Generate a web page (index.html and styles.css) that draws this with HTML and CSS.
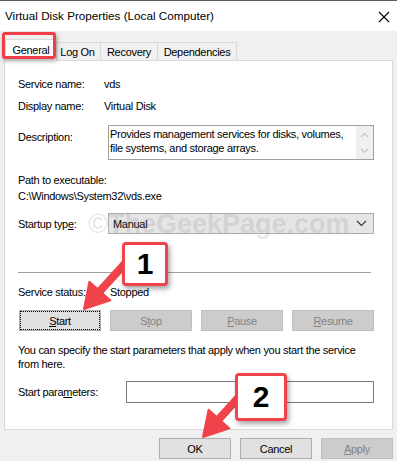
FILE: index.html
```html
<!DOCTYPE html>
<html lang="en">
<head>
  <meta charset="UTF-8">
  <title>Virtual Disk Properties (Local Computer)</title>
  <link rel="stylesheet" href="styles.css">
</head>
<body>
  <div class="window">
    <!-- Title bar -->
    <div class="titlebar">
      <span class="title">Virtual Disk Properties (Local Computer)</span>
      <svg class="close" width="12" height="12" viewBox="0 0 12 12">
        <path d="M1 1 L11 11 M11 1 L1 11" stroke="#000" stroke-width="1.1" fill="none"/>
      </svg>
    </div>

    <!-- Tabs -->
    <div class="tabs">
      <div class="tab tab-general active">General</div>
      <div class="tab tab-logon">Log On</div>
      <div class="tab tab-recovery">Recovery</div>
      <div class="tab tab-deps">Dependencies</div>
    </div>

    <!-- General tab page -->
    <div class="panel">
      <div class="row row-first">
        <span class="label">Service name:</span>
        <span class="value">vds</span>
      </div>
      <div class="row row-display">
        <span class="label">Display name:</span>
        <span class="value">Virtual Disk</span>
      </div>
      <div class="row row-desc">
        <span class="label label-wide">Description:</span>
        <div class="textbox">
          <div class="textbox-text">Provides management services for disks, volumes,<br>file systems, and storage arrays.</div>
          <div class="scrollbar">
            <svg width="9" height="6" viewBox="0 0 9 6"><path d="M1 5 L4.5 1.5 L8 5" stroke="#c4c4c4" stroke-width="1.2" fill="none"/></svg>
            <svg width="9" height="6" viewBox="0 0 9 6"><path d="M1 1 L4.5 4.5 L8 1" stroke="#c4c4c4" stroke-width="1.2" fill="none"/></svg>
          </div>
        </div>
      </div>
      <div class="path-label">Path to executable:</div>
      <div class="path-value">C:\Windows\System32\vds.exe</div>
      <div class="row row-startup">
        <span class="label label-wide">Startup typ<u>e</u>:</span>
        <div class="select">
          <span>Manual</span>
          <svg width="11" height="7" viewBox="0 0 11 7"><path d="M1 1 L5.5 5.5 L10 1" stroke="#333" stroke-width="1.1" fill="none"/></svg>
        </div>
      </div>
      <div class="separator"></div>
      <div class="row row-status">
        <span class="label">Service status:</span>
        <span class="value value-status">Stopped</span>
      </div>
      <div class="service-buttons">
        <button class="btn btn-focus"><u>S</u>tart</button>
        <button class="btn" disabled>S<u>t</u>op</button>
        <button class="btn" disabled><u>P</u>ause</button>
        <button class="btn" disabled><u>R</u>esume</button>
      </div>
      <p class="hint">You can specify the start parameters that apply when you start the service<br>from here.</p>
      <div class="row row-params">
        <span class="label label-params">Start para<u>m</u>eters:</span>
        <div class="input"></div>
      </div>
    </div>

    <!-- Dialog buttons -->
    <div class="actions">
      <button class="btn btn-dialog">OK</button>
      <button class="btn btn-dialog">Cancel</button>
      <button class="btn btn-dialog" disabled><u>A</u>pply</button>
    </div>
  </div>

  <!-- Annotations drawn over the dialog -->
  <div class="watermark">©TheGeekPage.com</div>
  <div class="highlight"></div>
  <svg class="arrows" width="397" height="461" viewBox="0 0 397 461">
    <g fill="#f0434b" stroke="#f0434b" stroke-linejoin="round">
      <line x1="132" y1="256" x2="100" y2="291" stroke-width="8"/>
      <polygon points="84,309 89.4,281.8 110.4,300.4" stroke-width="2"/>
      <line x1="248" y1="387" x2="219" y2="419" stroke-width="8"/>
      <polygon points="203,437 208.6,409.8 229.4,428.4" stroke-width="2"/>
    </g>
  </svg>
  <div class="callout callout-one">1</div>
  <div class="callout callout-two">2</div>
</body>
</html>
```

FILE: styles.css
```css
body {
  margin: 0;
  width: 397px;
  height: 461px;
  overflow: hidden;
  background-color: #f0f0f0;
  font-family: "Liberation Sans", Arial, sans-serif;
  font-size: 11px;
  line-height: 14px;
  letter-spacing: -0.3px;
  color: #000;
}

.window {
  height: 461px;
}

/* title bar */
.titlebar {
  height: 30px;
  background-color: #fff;
  border-top: 1px solid #5a5a5a;
  display: flex;
  align-items: center;
  justify-content: space-between;
  padding: 0 7px 0 5px;
}

.title {
  font-size: 11.7px;
  letter-spacing: 0;
}

.close {
  margin-top: 1px;
}

/* tabs */
.tabs {
  display: flex;
  align-items: flex-end;
  height: 29px;
  padding-left: 7px;
}

.tab {
  height: 18px;
  line-height: 18px;
  border: 1px solid #d9d9d9;
  border-bottom: none;
  background-color: #f0f0f0;
  text-align: center;
  margin-left: -1px;
  box-sizing: border-box;
}

.tab-general { width: 49px; }
.tab-logon { width: 47px; }
.tab-recovery { width: 58px; }
.tab-deps { width: 80px; }

.tab.active {
  background-color: #fff;
  height: 22px;
  line-height: 20px;
  width: 52px;
  margin: 0 -2px -1px -2px;
  position: relative;
  z-index: 1;
}

/* tab page */
.panel {
  margin: 0 4px;
  height: 370px;
  box-sizing: border-box;
  background-color: #fff;
  border: 1px solid #d9d9d9;
  padding: 16px 18px 0 13px;
}

.row {
  display: flex;
  align-items: flex-start;
}

.label {
  width: 86px;
  flex-shrink: 0;
}

.label-wide {
  width: 90px;
}

.label-params {
  width: 108px;
}

.row-display {
  margin-top: 8px;
}

.row-desc {
  margin-top: 12px;
}

.row-desc .label {
  margin-top: 5px;
}

.textbox {
  width: 266px;
  height: 35px;
  box-sizing: border-box;
  border: 1px solid #a0a0a0;
  display: flex;
}

.textbox-text {
  flex: 1;
  padding: 1px 0 0 1px;
  white-space: nowrap;
  overflow: hidden;
}

.scrollbar {
  width: 17px;
  flex-shrink: 0;
  background-color: #f0f0f0;
  display: flex;
  flex-direction: column;
  align-items: center;
  justify-content: space-between;
  padding: 6px 0 5px;
  box-sizing: border-box;
}

.path-label {
  margin-top: 13px;
}

.path-value {
  margin-top: 2px;
}

.row-startup {
  margin-top: 10px;
}

.row-startup .label {
  margin-top: 4px;
}

.select {
  width: 267px;
  height: 21px;
  box-sizing: border-box;
  border: 1px solid #acacac;
  background-color: #e5e5e5;
  display: flex;
  align-items: center;
  justify-content: space-between;
  padding: 0 6px 0 4px;
}

.separator {
  height: 1px;
  background-color: #a0a0a0;
  margin: 38px 3px 0 0;
}

.row-status {
  margin-top: 12px;
}

.value-status {
  margin-left: 6px;
}

/* buttons */
.btn {
  font-family: inherit;
  font-size: 11px;
  letter-spacing: inherit;
  height: 21px;
  padding: 0;
  background-color: #e1e1e1;
  border: 1px solid #adadad;
  color: #000;
}

.btn:disabled {
  background-color: #cccccc;
  border-color: #bfbfbf;
  color: #838383;
}

.btn-focus {
  outline: 1px dotted #000;
  outline-offset: -2px;
}

.service-buttons {
  display: grid;
  grid-template-columns: repeat(4, 1fr);
  gap: 9px;
  margin: 11px 0 0 1px;
}

.hint {
  margin: 12px 0 0;
  white-space: nowrap;
}

.row-params {
  margin-top: 10px;
  align-items: center;
}

.input {
  width: 248px;
  height: 22px;
  box-sizing: border-box;
  border: 1px solid #7a7a7a;
}

.actions {
  display: flex;
  justify-content: flex-end;
  gap: 9px;
  padding-right: 4px;
  margin-top: 8px;
}

.btn-dialog {
  width: 72px;
}

/* annotations */
.watermark {
  position: absolute;
  left: 88px;
  top: 209px;
  font-size: 27px;
  line-height: 30px;
  font-weight: bold;
  letter-spacing: 0;
  color: rgba(120, 120, 120, 0.17);
  white-space: nowrap;
}

.highlight {
  position: absolute;
  z-index: 5;
  left: 2px;
  top: 32px;
  width: 48px;
  height: 21px;
  border: 3px solid #ef3f48;
  border-radius: 3px;
  box-shadow: 1px 2px 4px rgba(0, 0, 0, 0.35);
}

.arrows {
  position: absolute;
  z-index: 5;
  left: 0;
  top: 0;
}

.callout {
  position: absolute;
  z-index: 6;
  box-sizing: border-box;
  background-color: #fff;
  border: 3px solid #f0434b;
  border-radius: 4px;
  box-shadow: 2px 3px 5px rgba(0, 0, 0, 0.35);
  font-size: 30px;
  font-weight: bold;
  letter-spacing: 0;
  line-height: 38px;
  text-align: center;
}

.callout-one {
  left: 122px;
  top: 242px;
  width: 46px;
  height: 44px;
}

.callout-two {
  left: 235px;
  top: 373px;
  width: 52px;
  height: 48px;
  line-height: 42px;
}
```
